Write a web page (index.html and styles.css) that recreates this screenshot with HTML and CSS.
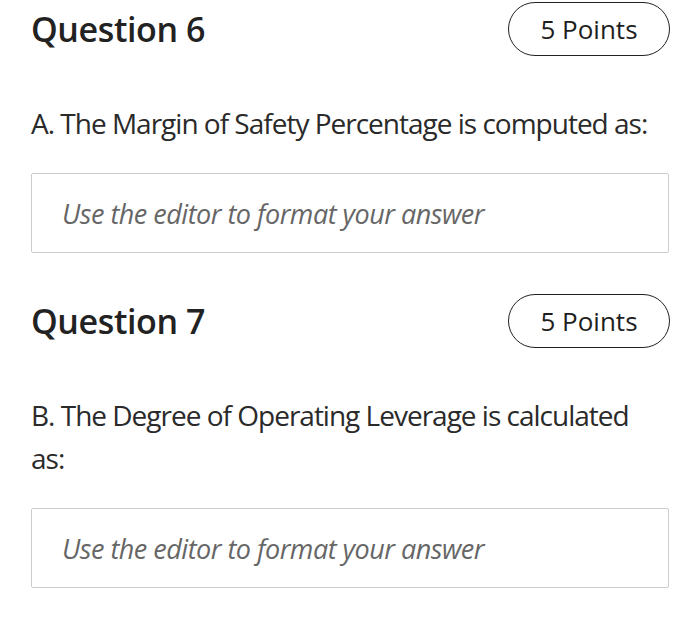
FILE: index.html
```html
<!DOCTYPE html>
<html>
<head>
<meta charset="utf-8">
<link rel="stylesheet" href="styles.css">
</head>
<body>
<main class="page">
  <section class="question">
    <header class="q-head">
      <h2 class="q-title">Question 6</h2>
      <span class="points">5 Points</span>
    </header>
    <p class="prompt">A. The Margin of Safety Percentage is computed as:</p>
    <div class="answer"><span class="placeholder">Use the editor to format your answer</span></div>
  </section>
  <section class="question">
    <header class="q-head">
      <h2 class="q-title">Question 7</h2>
      <span class="points">5 Points</span>
    </header>
    <p class="prompt">B. The Degree of Operating Leverage is calculated as:</p>
    <div class="answer"><span class="placeholder">Use the editor to format your answer</span></div>
  </section>
</main>
</body>
</html>
```

FILE: styles.css
```css
html, body {
  margin: 0;
  padding: 0;
  background: #ffffff;
}
body {
  font-family: "Open Sans", "Noto Sans", sans-serif;
  color: #222222;
}
.page {
  padding: 2px 31px 0 31px;
  display: flex;
  flex-direction: column;
  gap: 41px;
}
.question {
  display: flex;
  flex-direction: column;
}
.q-head {
  display: flex;
  align-items: center;
  justify-content: space-between;
}
.q-title {
  margin: 0;
  font-size: 34px;
  font-weight: 600;
  letter-spacing: -0.4px;
  line-height: 40px;
  color: #222222;
}
.points {
  box-sizing: border-box;
  width: 162px;
  height: 54px;
  border: 1.5px solid #222222;
  border-radius: 27px;
  display: flex;
  align-items: center;
  justify-content: center;
  font-size: 26px;
  font-weight: 400;
  color: #1e1e1e;
  margin-right: -1px;
}
.prompt {
  margin: 46px 0 0 0;
  padding-right: 16px;
  font-size: 28px;
  letter-spacing: -1px;
  line-height: 43px;
  color: #2a2a2a;
}
.answer {
  box-sizing: border-box;
  margin-top: 28px;
  height: 80px;
  border: 1.5px solid #cccccc;
  border-radius: 2px;
  padding: 0 30px;
  display: flex;
  align-items: center;
}
.placeholder {
  font-style: italic;
  font-size: 27px;
  letter-spacing: -0.5px;
  color: #666666;
}
```
